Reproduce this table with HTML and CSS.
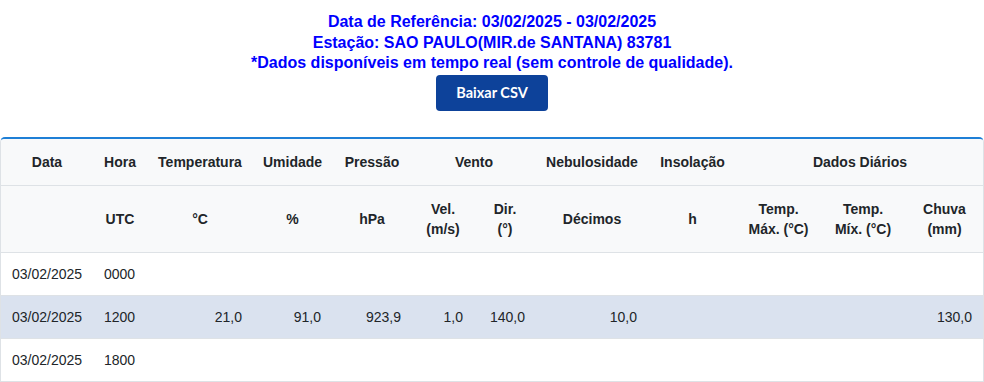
FILE: index.html
```html
<!DOCTYPE html>
<html lang="pt-BR">
<head>
<meta charset="utf-8">
<title>Dados</title>
<link rel="stylesheet" href="styles.css">
</head>
<body>
<div class="info">
  <p class="line">Data de Referência: 03/02/2025 - 03/02/2025</p>
  <p class="line">Estação: SAO PAULO(MIR.de SANTANA) 83781</p>
  <p class="line">*Dados disponíveis em tempo real (sem controle de qualidade).</p>
  <button class="btn" type="button">Baixar CSV</button>
</div>
<div class="card">
  <table class="tbl">
    <colgroup>
      <col class="w-data"><col class="w-hora"><col class="w-temp"><col class="w-umid"><col class="w-press"><col class="w-vel"><col class="w-dir"><col class="w-neb"><col class="w-ins"><col class="w-tmax"><col class="w-tmin"><col class="w-chuva">
    </colgroup>
    <thead>
      <tr class="h1">
        <th>Data</th><th>Hora</th><th>Temperatura</th><th>Umidade</th><th>Pressão</th><th colspan="2">Vento</th><th>Nebulosidade</th><th>Insolação</th><th colspan="3">Dados Diários</th>
      </tr>
      <tr class="h2">
        <th></th><th>UTC</th><th>°C</th><th>%</th><th>hPa</th><th>Vel.<br>(m/s)</th><th>Dir.<br>(°)</th><th>Décimos</th><th>h</th><th>Temp.<br>Máx. (°C)</th><th>Temp.<br>Míx. (°C)</th><th>Chuva<br>(mm)</th>
      </tr>
    </thead>
    <tbody>
      <tr>
        <td>03/02/2025</td><td>0000</td><td class="num"></td><td class="num"></td><td class="num"></td><td class="num"></td><td class="num"></td><td class="num"></td><td class="num"></td><td class="num"></td><td class="num"></td><td class="num"></td>
      </tr>
      <tr class="hl">
        <td>03/02/2025</td><td>1200</td><td class="num">21,0</td><td class="num">91,0</td><td class="num">923,9</td><td class="num">1,0</td><td class="num">140,0</td><td class="num">10,0</td><td class="num"></td><td class="num"></td><td class="num"></td><td class="num">130,0</td>
      </tr>
      <tr>
        <td>03/02/2025</td><td>1800</td><td class="num"></td><td class="num"></td><td class="num"></td><td class="num"></td><td class="num"></td><td class="num"></td><td class="num"></td><td class="num"></td><td class="num"></td><td class="num"></td>
      </tr>
    </tbody>
  </table>
</div>
</body>
</html>
```
FILE: styles.css
```css
html, body {
  margin: 0;
  padding: 0;
  background: #ffffff;
}
body {
  font-family: "Liberation Sans", Arial, sans-serif;
  color: #212529;
}
.info {
  text-align: center;
  padding-top: 12px;
}
.line {
  margin: 0;
  font-size: 16px;
  line-height: 20.5px;
  font-weight: bold;
  color: #0000ff;
}
.btn {
  display: block;
  margin: 1px auto 0;
  width: 112px;
  height: 36px;
  border: none;
  border-radius: 4px;
  background: #0d429a;
  color: #ffffff;
  font-family: Lato, "Liberation Sans", sans-serif;
  font-weight: bold;
  font-size: 14.5px;
  padding: 0;
}
.card {
  margin-top: 26px;
  border: 1px solid #dee2e6;
  border-top: 2px solid #1e7fd6;
  border-radius: 5px 5px 0 0;
  overflow: hidden;
}
.tbl {
  width: 100%;
  border-collapse: collapse;
  table-layout: fixed;
  font-size: 14px;
}
.w-data { width: 92px; }
.w-hora { width: 54px; }
.w-temp { width: 106px; }
.w-umid { width: 79px; }
.w-press { width: 80px; }
.w-vel { width: 62px; }
.w-dir { width: 62px; }
.w-neb { width: 112px; }
.w-ins { width: 89px; }
.w-tmax { width: 83px; }
.w-tmin { width: 86px; }
.w-chuva { width: 77px; }
.tbl thead {
  background: #f8f9fa;
}
.tbl th {
  font-weight: bold;
  text-align: center;
  vertical-align: middle;
  line-height: 20px;
  padding: 13px 4px;
  border-bottom: 1px solid #dee2e6;
  white-space: nowrap;
}
.tbl td {
  line-height: 20px;
  padding: 11px 11px;
  border-bottom: 1px solid #dee2e6;
  white-space: nowrap;
}
.tbl td.num {
  text-align: right;
}
.tbl tr.hl td {
  background: #dae2ef;
}
```
